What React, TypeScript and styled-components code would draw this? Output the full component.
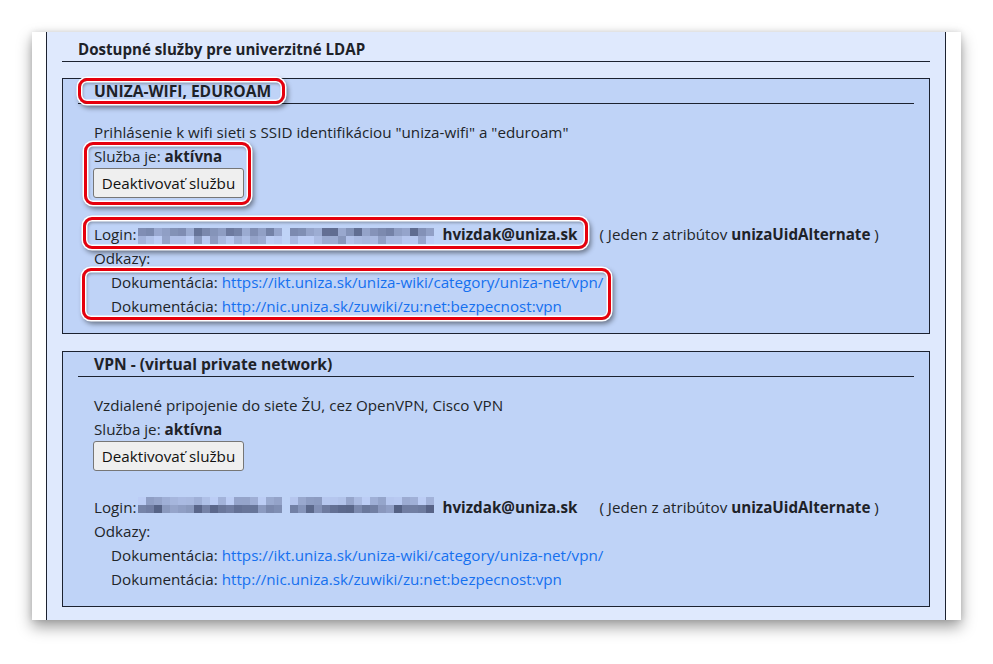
import React from "react";
import styled, { createGlobalStyle } from "styled-components";

const GlobalStyle = createGlobalStyle`
  html, body { margin: 0; padding: 0; background: #fff; }
  body {
    font-family: "Open Sans", "Noto Sans", "DejaVu Sans", sans-serif;
    font-size: 15.2px;
    color: #212529;
  }
  * { box-sizing: border-box; }
`;

const Page = styled.div`
  display: flex;
  padding: 32px 32px 44px 32px;
`;

const Card = styled.div`
  width: 929px;
  background: #fff;
  padding: 0 15px 0 14px;
  box-shadow: 0 7px 14px rgba(0, 0, 0, 0.38), 0 0 6px rgba(0, 0, 0, 0.12);
`;

const Panel = styled.div`
  background: #dfe9fd;
  border-left: 1px solid #1c2230;
  border-right: 1px solid #1c2230;
  padding: 6px 15px 13px 15px;
`;

const MainTitle = styled.h2`
  margin: 0 0 16px 0;
  padding: 0 0 1px 16px;
  border-bottom: 1px solid #1c2230;
  font-size: 15.1px;
  line-height: 22px;
  font-weight: 700;
  color: #1e2228;
`;

const ServiceBox = styled.section`
  border: 1px solid #1c2230;
  background: #bfd3f7;
  & + & { margin-top: 17px; }
`;

const BoxTitle = styled.h3`
  margin: 0 15px;
  padding: 1px 0 1px 16px;
  border-bottom: 1px solid #1c2230;
  font-size: 15.6px;
  line-height: 22px;
  font-weight: 700;
  color: #1e2228;
`;

const BoxBody = styled.div`
  padding: 16px 15px 15px 31px;
  line-height: 24px;
`;

const Line = styled.div<{ $indent?: number }>`
  padding-left: ${(p) => p.$indent ?? 0}px;
  white-space: nowrap;
`;

const Ring = styled.div<{
  $on: boolean;
  $t: number;
  $r: number;
  $b: number;
  $l: number;
  $inline?: boolean;
  $gap?: number;
}>`
  position: relative;
  display: ${(p) => (p.$inline ? "inline-block" : "block")};
  width: fit-content;
  margin-top: ${(p) => p.$gap ?? 0}px;
  &::after {
    content: "";
    display: ${(p) => (p.$on ? "block" : "none")};
    position: absolute;
    top: ${(p) => -p.$t}px;
    right: ${(p) => -p.$r}px;
    bottom: ${(p) => -p.$b}px;
    left: ${(p) => -p.$l}px;
    border: 3px solid #e6000c;
    border-radius: 9px;
    box-shadow: 0 0 0 1.5px #fff, 2px 3px 5px 1px rgba(0, 0, 0, 0.45),
      inset 0 0 0 1.5px #fff, inset 1px 2px 3px 1px rgba(0, 0, 0, 0.28);
    pointer-events: none;
  }
`;

const Button = styled.button`
  display: block;
  height: 30px;
  width: 151px;
  margin: 0 0 0 -1px;
  padding: 0 6px;
  background: #efefef;
  border: 1px solid #767676;
  border-radius: 3px;
  font-family: inherit;
  font-size: 15.2px;
  color: #111;
  white-space: nowrap;
`;

const Strong = styled.b`
  font-weight: 700;
  color: #1e2228;
`;

const Email = styled.b`
  font-weight: 700;
  color: #1e2228;
`;

const Note = styled.span`
  margin-left: 22px;
`;

const Link = styled.a`
  color: #1570ef;
  text-decoration: none;
`;

const BlurSvg = styled.svg`
  display: inline-block;
  vertical-align: top;
  margin: 0 6px 0 2px;
`;

function seeded(seed: number) {
  let s = seed;
  return () => {
    s = (s * 9301 + 49297) % 233280;
    return s / 233280;
  };
}

const Pixelated: React.FC<{ seed: number; rows: { y: number; dark: number }[] }> = ({ seed, rows }) => {
  const rnd = seeded(seed);
  const cols = 37;
  const rects: React.ReactNode[] = [];
  rows.forEach((row, ri) => {
    for (let c = 0; c < cols; c++) {
      if (c === 18) continue;
      const v = rnd();
      const d = Math.min(1, Math.max(0, row.dark + (v - 0.5) * 0.6));
      const r = Math.round(188 - d * 110);
      const g = Math.round(205 - d * 115);
      const b = Math.round(245 - d * 120);
      rects.push(
        <rect key={`${ri}-${c}`} x={c * 8} y={row.y} width={8} height={8} fill={`rgb(${r},${g},${b})`} />
      );
    }
  });
  return (
    <BlurSvg width={298} height={24} viewBox="0 0 298 24" aria-hidden>
      {rects}
    </BlurSvg>
  );
};

type Service = {
  title: string;
  desc: string;
  blurSeed: number;
  blurRows: { y: number; dark: number }[];
  highlight: boolean;
};

const services: Service[] = [
  {
    title: "UNIZA-WIFI, EDUROAM",
    desc: 'Prihlásenie k wifi sieti s SSID identifikáciou "uniza-wifi" a "eduroam"',
    blurSeed: 7,
    blurRows: [
      { y: 6, dark: 0.55 },
      { y: 14, dark: 0.2 },
    ],
    highlight: true,
  },
  {
    title: "VPN - (virtual private network)",
    desc: "Vzdialené pripojenie do siete ŽU, cez OpenVPN, Cisco VPN",
    blurSeed: 23,
    blurRows: [
      { y: 2, dark: 0.15 },
      { y: 10, dark: 0.65 },
    ],
    highlight: false,
  },
];

const links = [
  "https://ikt.uniza.sk/uniza-wiki/category/uniza-net/vpn/",
  "http://nic.uniza.sk/zuwiki/zu:net:bezpecnost:vpn",
];

const ServiceCard: React.FC<{ s: Service }> = ({ s }) => (
  <ServiceBox>
    <BoxTitle>
      <Ring $inline $on={s.highlight} $t={2} $r={14} $b={2} $l={16}>
        {s.title}
      </Ring>
    </BoxTitle>
    <BoxBody>
      <Line>{s.desc}</Line>
      <Ring $on={s.highlight} $t={2} $r={7} $b={7} $l={10}>
        <Line>
          Služba je: <Strong>aktívna</Strong>
        </Line>
        <Button type="button">Deaktivovať službu</Button>
      </Ring>
      <Line>
        <Ring $inline $on={s.highlight} $t={5} $r={11} $b={3} $l={11} $gap={24}>
          Login:
          <Pixelated seed={s.blurSeed} rows={s.blurRows} />
          <Email>hvizdak@uniza.sk</Email>
        </Ring>
        <Note>
          ( Jeden z atribútov <Strong>unizaUidAlternate</Strong> )
        </Note>
      </Line>
      <Line>Odkazy:</Line>
      <Ring $on={s.highlight} $t={2} $r={8} $b={2} $l={12}>
        {links.map((l) => (
          <Line key={l} $indent={17}>
            Dokumentácia: <Link href={l}>{l}</Link>
          </Line>
        ))}
      </Ring>
    </BoxBody>
  </ServiceBox>
);

export default function App() {
  return (
    <>
      <GlobalStyle />
      <Page>
        <Card>
          <Panel>
            <MainTitle>Dostupné služby pre univerzitné LDAP</MainTitle>
            {services.map((s) => (
              <ServiceCard key={s.title} s={s} />
            ))}
          </Panel>
        </Card>
      </Page>
    </>
  );
}
